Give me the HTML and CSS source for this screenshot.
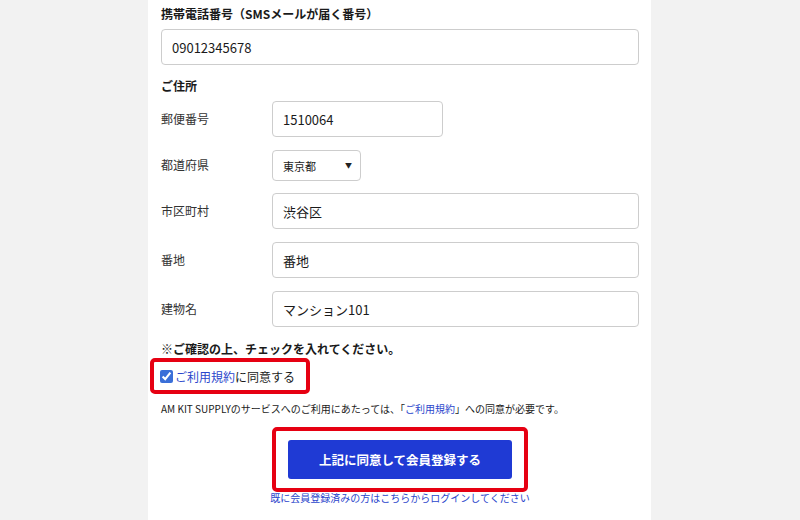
FILE: index.html
```html
<!DOCTYPE html>
<html lang="ja">
<head>
<meta charset="utf-8">
<title>会員登録</title>
<link rel="stylesheet" href="styles.css">
</head>
<body>
<main class="panel">
  <div class="field-title">携帯電話番号（SMSメールが届く番号）</div>
  <input class="text-input full" type="text" value="09012345678">

  <div class="section-title">ご住所</div>
  <div class="address-grid">
    <div class="row-label">郵便番号</div>
    <div><input class="text-input postal" type="text" value="1510064"></div>

    <div class="row-label">都道府県</div>
    <div><div class="select-wrap"><select class="pref-select"><option>東京都</option></select><span class="select-arrow">▼</span></div></div>

    <div class="row-label">市区町村</div>
    <div><input class="text-input full" type="text" value="渋谷区"></div>

    <div class="row-label">番地</div>
    <div><input class="text-input full" type="text" value="番地"></div>

    <div class="row-label">建物名</div>
    <div><input class="text-input full" type="text" value="マンション101"></div>
  </div>

  <div class="confirm-title">※ご確認の上、チェックを入れてください。</div>
  <label class="agree-box">
    <input class="agree-check" type="checkbox" checked>
    <span><a class="link" href="#">ご利用規約</a>に同意する</span>
  </label>
  <p class="note">AM KIT SUPPLYのサービスへのご利用にあたっては、「<a class="link" href="#">ご利用規約</a>」への同意が必要です。</p>

  <div class="submit-area">
    <div class="submit-box">
      <button class="submit-btn" type="button">上記に同意して会員登録する</button>
    </div>
    <a class="login-link" href="#">既に会員登録済みの方はこちらからログインしてください</a>
  </div>
</main>
</body>
</html>
```

FILE: styles.css
```css
* { box-sizing: border-box; }

html, body {
  margin: 0;
  padding: 0;
  background: #f2f2f2;
  height: 100%;
}

body {
  font-family: "Noto Sans CJK JP", "Noto Sans", sans-serif;
  color: #222;
}

.panel {
  width: 503px;
  min-height: 520px;
  margin-left: 148px;
  background: #fff;
  padding: 6px 12px 0 13px;
}

.field-title,
.section-title,
.confirm-title {
  font-size: 12px;
  font-weight: bold;
  line-height: 16px;
  color: #1a1a1a;
}

.field-title { margin-bottom: 7px; }
.section-title { margin-top: 13px; margin-bottom: 7px; }

.text-input {
  display: block;
  height: 36px;
  border: 1px solid #cdcdcd;
  border-radius: 4px;
  padding: 0 10px;
  font-family: "Noto Sans CJK JP", "Noto Sans", sans-serif;
  font-size: 13px;
  color: #1a1a1a;
  background: #fff;
  outline: none;
}

.text-input.full { width: 100%; }
.text-input.postal { width: 171px; }

.address-grid {
  display: grid;
  grid-template-columns: 111px 1fr;
  row-gap: 13px;
  align-items: center;
}

.address-grid > :nth-child(4) { margin-bottom: -1px; }

.row-label {
  font-size: 12px;
  line-height: 16px;
  color: #333;
}

.select-wrap {
  position: relative;
  width: 89px;
  height: 31px;
}

.pref-select {
  appearance: none;
  -webkit-appearance: none;
  width: 100%;
  height: 31px;
  border: 1px solid #cdcdcd;
  border-radius: 4px;
  background: #fff;
  padding: 0 10px;
  font-family: "Noto Sans CJK JP", "Noto Sans", sans-serif;
  font-size: 11px;
  color: #1a1a1a;
  outline: none;
}

.select-arrow {
  position: absolute;
  right: 9px;
  top: 11px;
  font-size: 7px;
  line-height: 9px;
  color: #222;
  pointer-events: none;
}

.confirm-title { margin-top: 14px; }

.agree-box {
  display: inline-flex;
  align-items: center;
  gap: 2px;
  height: 36px;
  margin-top: 1px;
  margin-left: -11px;
  padding: 0 11px 0 6px;
  border: 4px solid #e60012;
  border-radius: 5px;
  font-size: 12px;
  color: #1a1a1a;
}

.agree-check {
  width: 13px;
  height: 13px;
  margin: 0;
  accent-color: #3a6fd8;
}

.link {
  color: #2b46cc;
  text-decoration: none;
}

.note {
  margin: 8px 0 0;
  font-size: 10px;
  line-height: 14px;
  color: #1a1a1a;
}

.submit-area {
  display: flex;
  flex-direction: column;
  align-items: center;
  margin-top: 11px;
}

.submit-box {
  border: 4px solid #e60012;
  border-radius: 5px;
  padding: 9px 12px;
}

.submit-btn {
  display: block;
  width: 224px;
  height: 39px;
  border: none;
  border-radius: 3px;
  background: #1f3ad4;
  color: #fff;
  font-family: "Noto Sans CJK JP", "Noto Sans", sans-serif;
  font-size: 12.5px;
  font-weight: bold;
  cursor: pointer;
}

.login-link {
  font-size: 10px;
  line-height: 12px;
  color: #2b46cc;
  text-decoration: none;
}
```
